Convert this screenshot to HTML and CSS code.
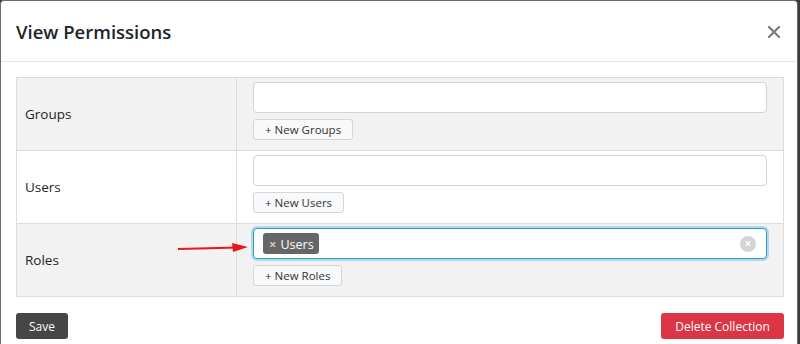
FILE: index.html
```html
<!DOCTYPE html>
<html>
<head>
<meta charset="utf-8">
<link rel="stylesheet" href="styles.css">
</head>
<body>
<div class="modal">
  <div class="modal-header">
    <h5 class="modal-title">View Permissions</h5>
    <svg class="close" width="12" height="12" viewBox="0 0 12 12" aria-label="Close"><path d="M1 1L11 11M11 1L1 11" stroke="#7b7b7b" stroke-width="2.2" stroke-linecap="square"/></svg>
  </div>
  <div class="modal-body">
    <div class="perm-table">
      <div class="row striped">
        <div class="label">Groups</div>
        <div class="field">
          <div class="input"></div>
          <button class="add-btn">+ New Groups</button>
        </div>
      </div>
      <div class="row">
        <div class="label">Users</div>
        <div class="field">
          <div class="input"></div>
          <button class="add-btn">+ New Users</button>
        </div>
      </div>
      <div class="row striped">
        <div class="label">Roles</div>
        <div class="field">
          <div class="input focused">
            <span class="tag"><span class="tag-x">&times;</span>Users</span>
            <span class="clear">&times;</span>
            <svg class="arrow" width="72" height="12" viewBox="0 0 72 12"><line x1="0" y1="7" x2="60" y2="5.5" stroke="#e8161b" stroke-width="2.2"/><polygon points="54,1 70,5 55,10" fill="#e8161b"/></svg>
          </div>
          <button class="add-btn">+ New Roles</button>
        </div>
      </div>
    </div>
  </div>
  <div class="modal-footer">
    <button class="btn btn-save">Save</button>
    <button class="btn btn-delete">Delete Collection</button>
  </div>
</div>
</body>
</html>
```
FILE: styles.css
```css
* { box-sizing: border-box; }
html, body { margin: 0; padding: 0; }
body {
  background: #3c3c3c;
  font-family: "Segoe UI", "Open Sans", "Noto Sans", sans-serif;
  color: #212529;
  height: 344px;
  overflow: hidden;
}
.modal {
  width: 798px;
  height: 400px;
  background: #fff;
  border: 1px solid #6b6b6b;
  border-radius: 4px;
}
.modal-header {
  height: 61px;
  border-bottom: 1px solid #e5e5e5;
  display: flex;
  align-items: center;
  justify-content: space-between;
  padding: 0 17px 0 15px;
}
.modal-title {
  margin: 0;
  font-size: 18.5px;
  font-weight: 600;
}
.close {
  display: block;
  margin-top: 1px;
}
.modal-body {
  padding: 15px 13px 0 15px;
}
.perm-table {
  border: 1px solid #dcdcdc;
  width: 768px;
}
.row {
  display: grid;
  grid-template-columns: 220px 1fr;
  height: 73px;
  border-top: 1px solid #dcdcdc;
}
.row:first-child { border-top: none; height: 72px; }
.row.striped { background: #f2f2f2; }
.label {
  border-right: 1px solid #dcdcdc;
  display: flex;
  align-items: center;
  padding-left: 8px;
  font-size: 13.5px;
}
.field {
  padding: 4px 16px 0 16px;
  display: flex;
  flex-direction: column;
  align-items: flex-start;
  gap: 6px;
}
.input {
  width: 100%;
  height: 31px;
  background: #fff;
  border: 1px solid #cfd4da;
  border-radius: 4px;
  position: relative;
  display: flex;
  align-items: center;
  padding-left: 9px;
}
.input.focused {
  border-color: #2c9fc6;
  box-shadow: 0 0 0 2px #b5d6f2;
}
.tag {
  background: #666;
  color: #fff;
  font-size: 12.5px;
  height: 21px;
  border-radius: 3px;
  display: inline-flex;
  align-items: center;
  padding: 1px 5px 0 6px;
}
.tag-x {
  color: #c8c8c8;
  font-size: 13px;
  margin-right: 4px;
  font-weight: 700;
}
.clear {
  position: absolute;
  right: 10px;
  top: 7px;
  width: 16px;
  height: 16px;
  border-radius: 50%;
  background: #d4d4d4;
  color: #fff;
  font-size: 12px;
  line-height: 16px;
  text-align: center;
  font-weight: 700;
}
.arrow {
  position: absolute;
  left: -76px;
  top: 13px;
}
.add-btn {
  height: 21px;
  padding: 0 11px;
  font-family: inherit;
  font-size: 11.5px;
  color: #333;
  background: #f8f9fa;
  border: 1px solid #d6d6d6;
  border-radius: 3px;
  line-height: 19px;
  white-space: nowrap;
}
.modal-footer {
  display: flex;
  justify-content: space-between;
  padding: 16px 13px 0 15px;
}
.btn {
  height: 26px;
  border: none;
  border-radius: 3px;
  color: #fff;
  font-family: inherit;
  font-size: 12px;
  padding: 0;
  white-space: nowrap;
}
.btn-save { background: #464646; width: 52px; }
.btn-delete { background: #dc3545; width: 123px; }
```
